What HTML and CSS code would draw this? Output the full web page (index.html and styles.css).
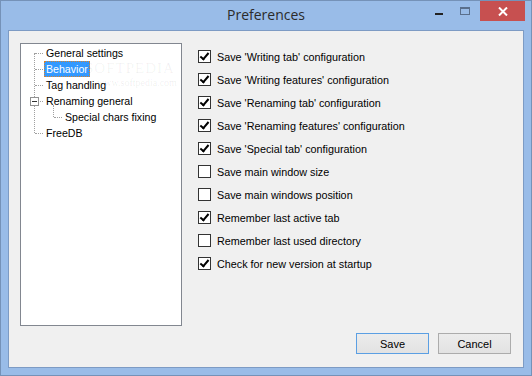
FILE: index.html
```html
<!DOCTYPE html>
<html>

<head>
    <title>Preferences</title>
    <link rel="stylesheet" href="styles.css">
</head>

<body>
    <div class="window">
        <div class="titlebar">
            <div class="title">Preferences</div>
            <div class="caption-buttons">
                <span class="cap-btn minimize"><span class="min-bar"></span></span>
                <span class="cap-btn maximize"><span class="max-box"></span></span>
                <span class="cap-btn close">
                    <svg width="10" height="9" viewBox="0 0 10 9">
                        <path d="M1 0.5 L9 8.5 M9 0.5 L1 8.5" stroke="#fff" stroke-width="2" fill="none"/>
                    </svg>
                </span>
            </div>
        </div>

        <div class="client">
            <div class="main">
                <div class="tree">
                    <ul class="tree-root">
                        <li><span class="node">General settings</span></li>
                        <li><span class="node selected">Behavior</span></li>
                        <li><span class="node">Tag handling</span></li>
                        <li>
                            <span class="toggle"><span class="toggle-minus"></span></span>
                            <span class="node">Renaming general</span>
                            <ul class="tree-sub">
                                <li><span class="node">Special chars fixing</span></li>
                            </ul>
                        </li>
                        <li><span class="node">FreeDB</span></li>
                    </ul>
                    <div class="watermark">
                        <span class="wm-big">SOFTPEDIA</span>
                        <span class="wm-small">www.softpedia.com</span>
                    </div>
                </div>

                <div class="options">
                    <label class="option"><span class="check checked"></span>Save 'Writing tab' configuration</label>
                    <label class="option"><span class="check checked"></span>Save 'Writing features' configuration</label>
                    <label class="option"><span class="check checked"></span>Save 'Renaming tab' configuration</label>
                    <label class="option"><span class="check checked"></span>Save 'Renaming features' configuration</label>
                    <label class="option"><span class="check checked"></span>Save 'Special tab' configuration</label>
                    <label class="option"><span class="check"></span>Save main window size</label>
                    <label class="option"><span class="check"></span>Save main windows position</label>
                    <label class="option"><span class="check checked"></span>Remember last active tab</label>
                    <label class="option"><span class="check"></span>Remember last used directory</label>
                    <label class="option"><span class="check checked"></span>Check for new version at startup</label>
                </div>
            </div>

            <div class="footer">
                <button class="btn default">Save</button>
                <button class="btn">Cancel</button>
            </div>
        </div>
    </div>
</body>

</html>
```

FILE: styles.css
```css
html,
body {
    margin: 0;
    padding: 0;
}

body {
    font-family: "Liberation Sans", Arial, sans-serif;
    font-size: 11px;
    color: #000;
}

.window {
    width: 532px;
    height: 376px;
    box-sizing: border-box;
    border: 1px solid #7592b8;
    background-color: #99bce8;
    padding: 0 7px 7px 7px;
    display: flex;
    flex-direction: column;
}

.titlebar {
    height: 29px;
    position: relative;
    display: flex;
    justify-content: center;
}

.title {
    font-family: "Open Sans", "Noto Sans", sans-serif;
    font-size: 14px;
    color: #2b2b2b;
    line-height: 28px;
}

.caption-buttons {
    position: absolute;
    right: -1px;
    top: 0;
    display: flex;
    align-items: flex-start;
}

.cap-btn {
    display: flex;
    align-items: center;
    justify-content: center;
}

.minimize {
    width: 26px;
    height: 20px;
    align-items: flex-start;
}

.min-bar {
    width: 8px;
    height: 2px;
    background-color: #222;
    margin-top: 12px;
}

.maximize {
    width: 26px;
    height: 20px;
    align-items: flex-start;
}

.max-box {
    width: 8px;
    height: 5px;
    border: 1px solid #5a6f8c;
    border-top-width: 2px;
    margin-top: 6px;
}

.close {
    width: 45px;
    height: 20px;
    background-color: #c75050;
    margin-left: 2px;
}

.client {
    flex: 1;
    border: 1px solid #7d9bc4;
    background-color: #f0f0f0;
    display: flex;
    flex-direction: column;
}

.main {
    display: flex;
    align-items: flex-start;
    padding-left: 11px;
}

/* tree view */
.tree {
    position: relative;
    width: 160px;
    height: 281px;
    margin-top: 12px;
    border: 1px solid #828790;
    background-color: #fff;
    overflow: hidden;
    font-size: 10.6px;
}

.tree ul {
    list-style: none;
    margin: 0;
    padding: 0;
    position: relative;
}

.tree-root {
    padding-top: 1px !important;
}

.tree li {
    position: relative;
    padding-left: 23px;
    line-height: 16px;
}

.tree-root::before {
    content: "";
    position: absolute;
    left: 13px;
    top: 9px;
    bottom: 8px;
    border-left: 1px dotted #a0a0a0;
}

.tree li::before {
    content: "";
    position: absolute;
    left: 14px;
    top: 8px;
    width: 8px;
    border-top: 1px dotted #a0a0a0;
}

.tree-sub::before {
    content: "";
    position: absolute;
    left: 9px;
    top: -4px;
    height: 12px;
    border-left: 1px dotted #a0a0a0;
}

.tree-sub li {
    padding-left: 19px;
}

.tree-sub li::before {
    left: 10px;
    width: 8px;
}

.node {
    display: inline-block;
    padding: 0 1px;
    height: 16px;
    box-sizing: border-box;
    border: 1px solid transparent;
    line-height: 14px;
}

.node.selected {
    background-color: #3399ff;
    color: #fff;
    border: 1px dotted #d9822b;
}

.toggle {
    position: absolute;
    left: 9px;
    top: 4px;
    width: 7px;
    height: 7px;
    border: 1px solid #919191;
    background-color: #fff;
    z-index: 1;
    display: flex;
    align-items: center;
    justify-content: center;
}

.toggle-minus {
    width: 5px;
    height: 1px;
    background-color: #333;
}

.watermark {
    position: absolute;
    left: 64px;
    top: 16px;
    display: flex;
    flex-direction: column;
    pointer-events: none;
}

.wm-big {
    font-family: "Liberation Serif", serif;
    font-size: 15px;
    letter-spacing: 1px;
    color: rgba(0, 0, 0, 0.06);
}

.wm-small {
    font-family: "Liberation Serif", serif;
    font-size: 10px;
    color: rgba(0, 0, 0, 0.08);
    margin-left: 12px;
}

/* options */
.options {
    display: flex;
    flex-direction: column;
    margin-left: 16px;
    margin-top: 14px;
    font-size: 10.8px;
}

.option {
    display: flex;
    align-items: center;
    height: 23px;
}

.check {
    width: 11px;
    height: 11px;
    border: 1px solid #333;
    background-color: #fff;
    margin-right: 6px;
    position: relative;
}

.check.checked::after {
    content: "";
    position: absolute;
    left: 3px;
    top: 0px;
    width: 3px;
    height: 7px;
    border-right: 2px solid #000;
    border-bottom: 2px solid #000;
    transform: rotate(40deg);
}

/* buttons */
.footer {
    margin-top: auto;
    display: flex;
    justify-content: flex-end;
    gap: 9px;
    padding: 0 12px 13px 0;
}

.btn {
    width: 73px;
    height: 21px;
    font-family: "Liberation Sans", Arial, sans-serif;
    font-size: 11px;
    color: #000;
    background: linear-gradient(#ececec, #e2e2e2);
    border: 1px solid #acacac;
    padding: 0;
}

.btn.default {
    border-color: #5b9fe3;
}
```
